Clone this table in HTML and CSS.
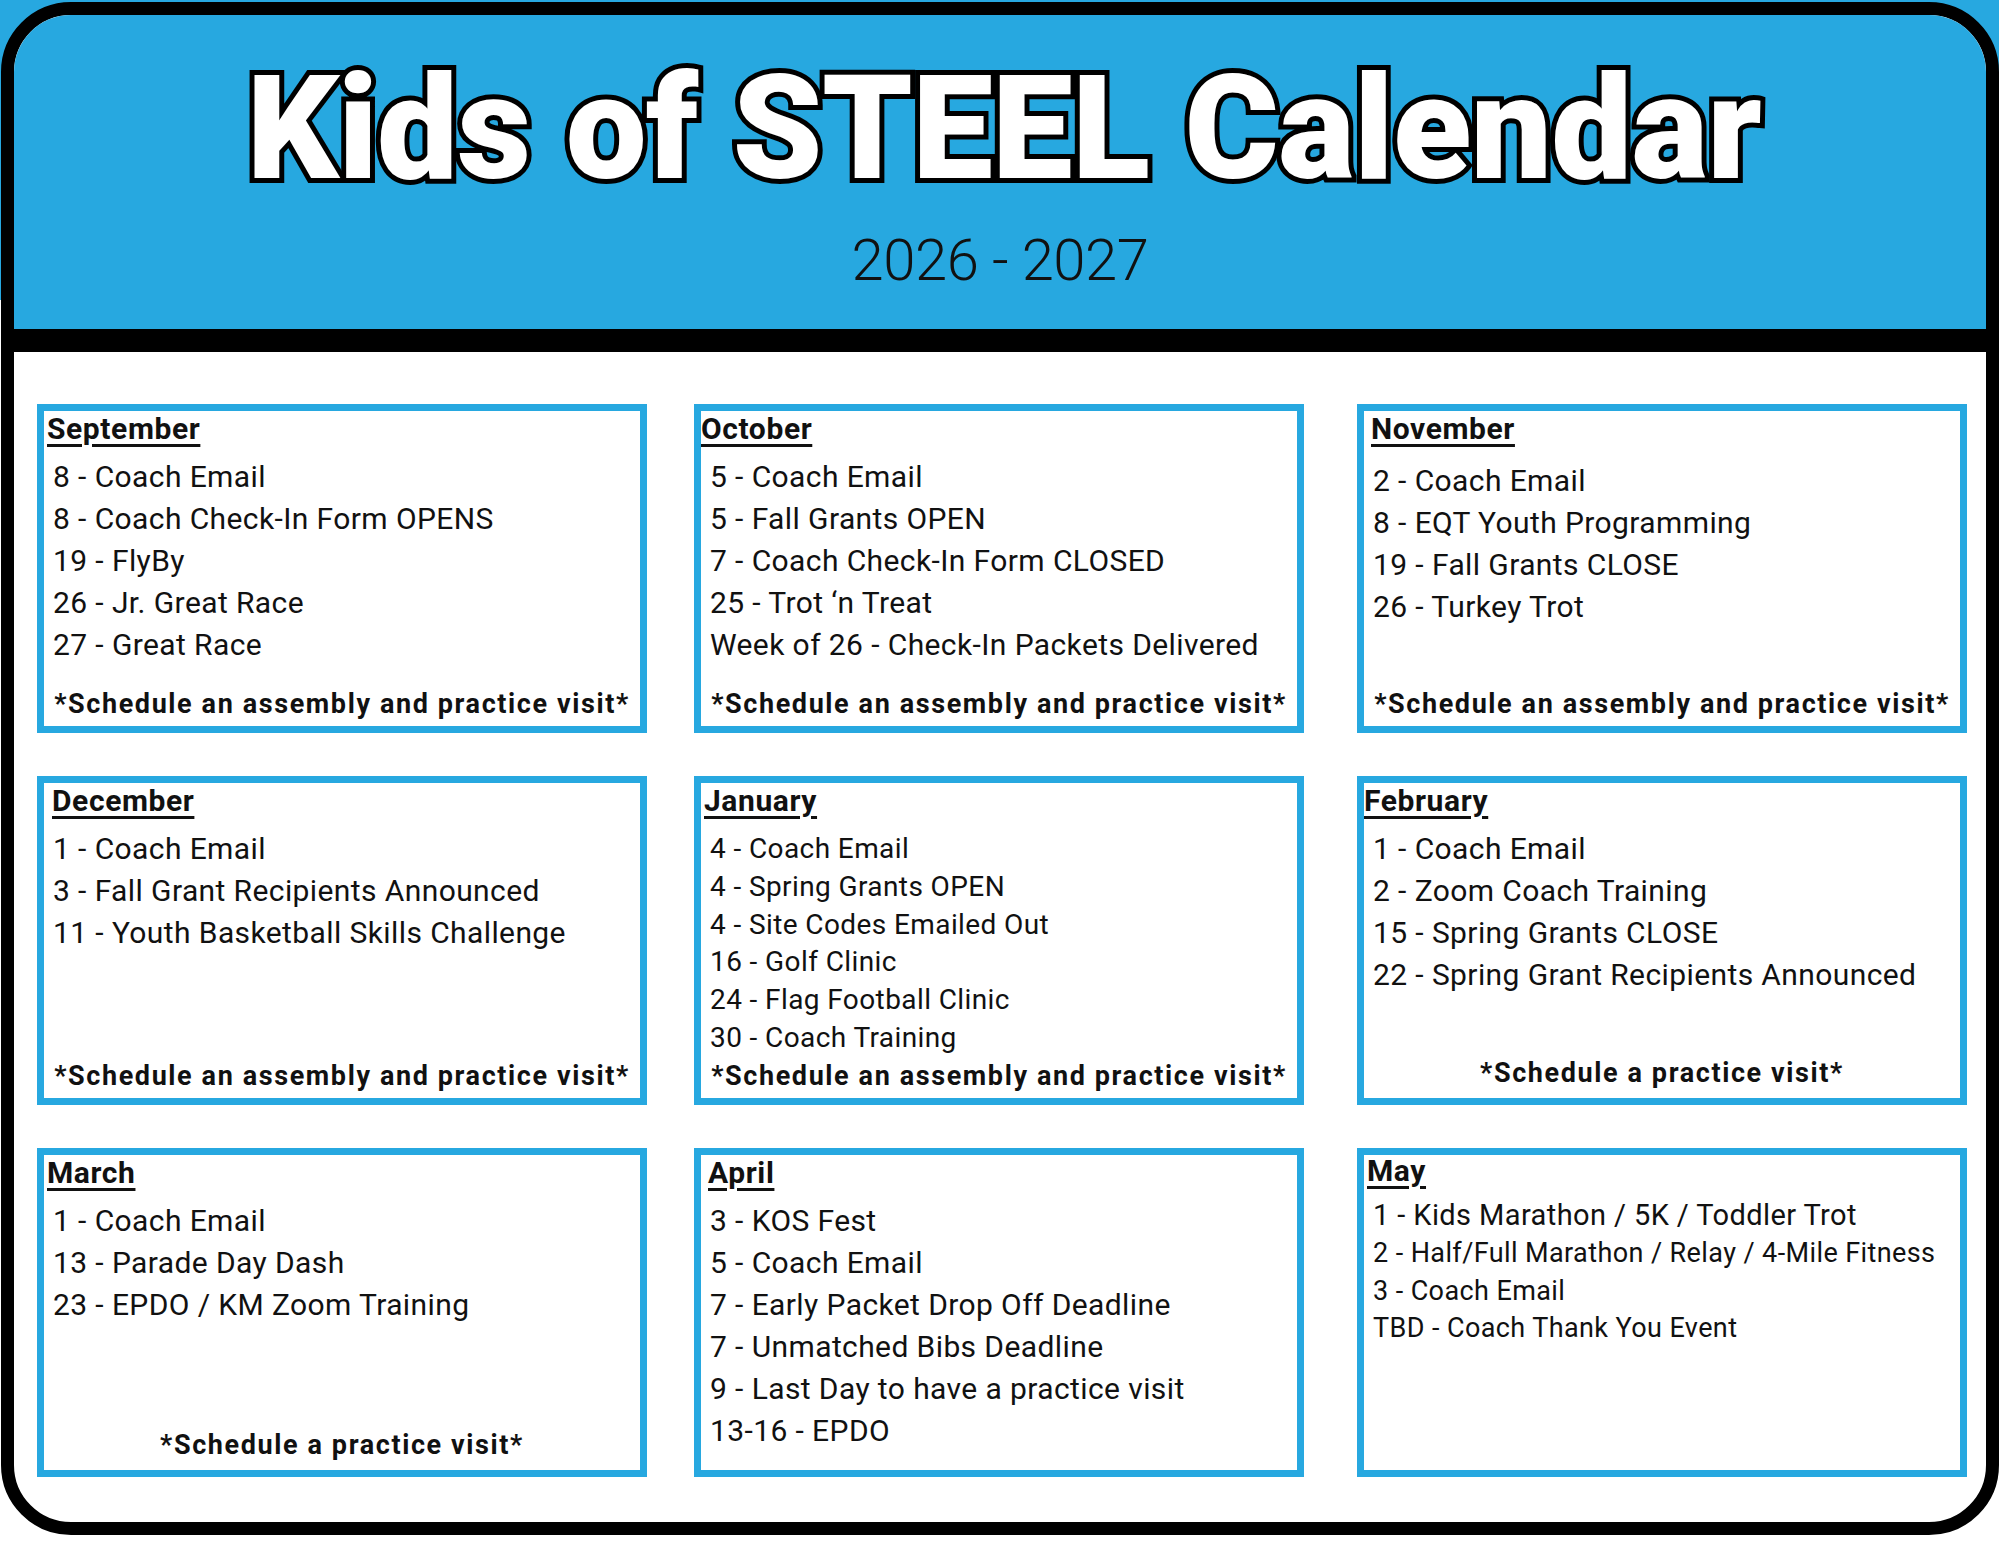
FILE: index.html
```html
<!DOCTYPE html>
<html lang="en">
<head>
<meta charset="utf-8">
<title>Kids of STEEL Calendar 2026 - 2027</title>
<link rel="stylesheet" href="styles.css">
</head>
<body>
<div class="frame">
  <header class="hero">
    <h1 class="title">Kids of STEEL Calendar</h1>
    <p class="years">2026 - 2027</p>
  </header>
  <div class="band"></div>
  <main class="grid">
    <section class="month">
      <h2 class="month__name">September</h2>
      <ul class="month__events">
        <li>8 - Coach Email</li>
        <li>8 - Coach Check-In Form OPENS</li>
        <li>19 - FlyBy</li>
        <li>26 - Jr. Great Race</li>
        <li>27 - Great Race</li>
      </ul>
      <p class="month__note">*Schedule an assembly and practice visit*</p>
    </section>
    <section class="month month--oct">
      <h2 class="month__name">October</h2>
      <ul class="month__events">
        <li>5 - Coach Email</li>
        <li>5 - Fall Grants OPEN</li>
        <li>7 - Coach Check-In Form CLOSED</li>
        <li>25 - Trot ‘n Treat</li>
        <li>Week of 26 - Check-In Packets Delivered</li>
      </ul>
      <p class="month__note">*Schedule an assembly and practice visit*</p>
    </section>
    <section class="month month--nov">
      <h2 class="month__name">November</h2>
      <ul class="month__events">
        <li>2 - Coach Email</li>
        <li>8 - EQT Youth Programming</li>
        <li>19 - Fall Grants CLOSE</li>
        <li>26 - Turkey Trot</li>
      </ul>
      <p class="month__note">*Schedule an assembly and practice visit*</p>
    </section>
    <section class="month month--dec">
      <h2 class="month__name">December</h2>
      <ul class="month__events">
        <li>1 - Coach Email</li>
        <li>3 - Fall Grant Recipients Announced</li>
        <li>11 - Youth Basketball Skills Challenge</li>
      </ul>
      <p class="month__note">*Schedule an assembly and practice visit*</p>
    </section>
    <section class="month month--jan">
      <h2 class="month__name">January</h2>
      <ul class="month__events month__events--compact">
        <li>4 - Coach Email</li>
        <li>4 - Spring Grants OPEN</li>
        <li>4 - Site Codes Emailed Out</li>
        <li>16 - Golf Clinic</li>
        <li>24 - Flag Football Clinic</li>
        <li>30 - Coach Training</li>
      </ul>
      <p class="month__note">*Schedule an assembly and practice visit*</p>
    </section>
    <section class="month month--feb">
      <h2 class="month__name">February</h2>
      <ul class="month__events">
        <li>1 - Coach Email</li>
        <li>2 - Zoom Coach Training</li>
        <li>15 - Spring Grants CLOSE</li>
        <li>22 - Spring Grant Recipients Announced</li>
      </ul>
      <p class="month__note month__note--raised">*Schedule a practice visit*</p>
    </section>
    <section class="month month--mar">
      <h2 class="month__name">March</h2>
      <ul class="month__events">
        <li>1 - Coach Email</li>
        <li>13 - Parade Day Dash</li>
        <li>23 - EPDO / KM Zoom Training</li>
      </ul>
      <p class="month__note month__note--raised">*Schedule a practice visit*</p>
    </section>
    <section class="month month--apr">
      <h2 class="month__name">April</h2>
      <ul class="month__events">
        <li>3 - KOS Fest</li>
        <li>5 - Coach Email</li>
        <li>7 - Early Packet Drop Off Deadline</li>
        <li>7 - Unmatched Bibs Deadline</li>
        <li>9 - Last Day to have a practice visit</li>
        <li>13-16 - EPDO</li>
      </ul>
    </section>
    <section class="month month--may">
      <h2 class="month__name">May</h2>
      <ul class="month__events month__events--compact month__events--small">
        <li class="event--lg">1 - Kids Marathon / 5K / Toddler Trot</li>
        <li>2 - Half/Full Marathon / Relay / 4-Mile Fitness</li>
        <li>3 - Coach Email</li>
        <li>TBD - Coach Thank You Event</li>
      </ul>
    </section>
  </main>
</div>
</body>
</html>
```

FILE: styles.css
```css
html {
  background: #ffffff linear-gradient(#27a8e0, #27a8e0) no-repeat 0 0 / 100% 300px;
}

body {
  margin: 0;
  font-family: Roboto, "Liberation Sans", sans-serif;
  color: #111;
}

.frame {
  box-sizing: border-box;
  width: 1998px;
  height: 1533px;
  margin: 2px 0 0 1px;
  border: 13px solid #000;
  border-radius: 70px;
  overflow: hidden;
  background: #fff;
  display: flex;
  flex-direction: column;
}

.hero {
  box-sizing: border-box;
  height: 314px;
  flex: none;
  background: #27a8e0;
  text-align: center;
  padding-top: 42px;
}

.title {
  margin: 0;
  padding-left: 8px;
  font-size: 144px;
  font-weight: 900;
  line-height: 1;
  letter-spacing: -0.7px;
  color: #fff;
  -webkit-text-stroke: 10px #000;
  paint-order: stroke fill;
}

.years {
  margin: 30px 0 0;
  font-size: 58px;
  font-weight: 300;
  line-height: 1;
  letter-spacing: -0.5px;
  color: #111;
}

.band {
  height: 23px;
  flex: none;
  background: #000;
}

.grid {
  flex: 1;
  display: grid;
  grid-template-columns: 610px 610px 616px;
  grid-template-rows: repeat(3, 329px);
  justify-items: end;
  column-gap: 47px;
  row-gap: 43px;
  padding: 52px 0 0 23px;
}

.month {
  box-sizing: border-box;
  width: 610px;
  border: 7px solid #27a8e0;
  padding: 3px 0 8px;
  display: flex;
  flex-direction: column;
  min-width: 0;
}

.month__name {
  align-self: flex-start;
  margin: 0 0 0 3px;
  font-size: 30px;
  font-weight: 700;
  line-height: 1;
  letter-spacing: 0.6px;
  text-decoration: underline;
  text-decoration-thickness: 3px;
  text-underline-offset: 5px;
}

.month__events {
  list-style: none;
  margin: 12px 0 0;
  padding: 0 0 0 9px;
  font-size: 30px;
  line-height: 42px;
  letter-spacing: 0.4px;
  white-space: nowrap;
}

.month__events--compact {
  font-size: 28px;
  line-height: 37.8px;
  margin-top: 14px;
}

.month__events--small {
  font-size: 27px;
  margin-top: 11px;
}

.event--lg {
  font-size: 29px;
}

.month__note {
  margin: auto 0 0;
  text-align: center;
  font-size: 27px;
  font-weight: 700;
  line-height: 1;
  letter-spacing: 1.6px;
  white-space: nowrap;
}

.month__note--raised {
  margin-bottom: 3px;
}

.month--oct .month__name,
.month--feb .month__name {
  margin-left: 0;
}

.month--nov .month__name,
.month--apr .month__name {
  margin-left: 7px;
}

.month--dec .month__name {
  margin-left: 8px;
}

.month--nov .month__events {
  margin-top: 16px;
}

.month--may {
  padding-top: 1px;
}
```
